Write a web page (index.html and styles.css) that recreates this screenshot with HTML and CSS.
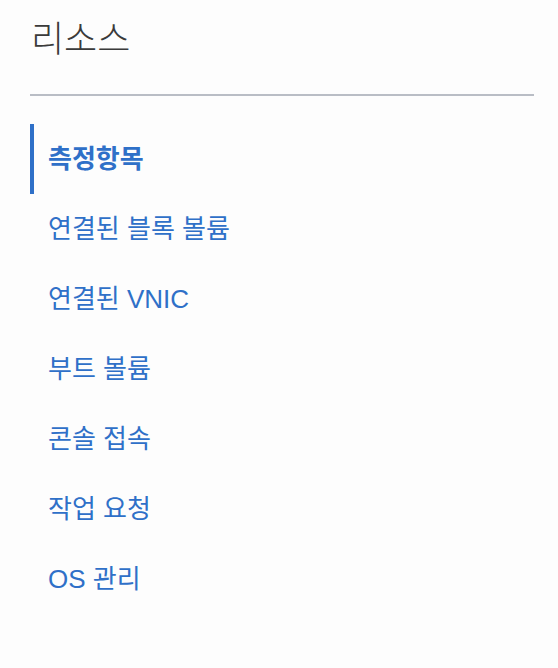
FILE: index.html
```html
<!DOCTYPE html>
<html lang="ko">
<head>
<meta charset="utf-8">
<link rel="stylesheet" href="styles.css">
</head>
<body>
<div class="panel">
  <h2 class="title">리소스</h2>
  <ul class="nav">
    <li class="item active">측정항목</li>
    <li class="item">연결된 블록 볼륨</li>
    <li class="item">연결된 VNIC</li>
    <li class="item">부트 볼륨</li>
    <li class="item">콘솔 접속</li>
    <li class="item">작업 요청</li>
    <li class="item">OS 관리</li>
  </ul>
</div>
</body>
</html>
```
FILE: styles.css
```css
html, body {
  margin: 0;
  padding: 0;
  background: #fdfdfd;
}
body {
  font-family: "Liberation Sans", "Noto Sans CJK KR", sans-serif;
}
.panel {
  padding: 0 24px 0 30px;
}
.title {
  margin: 0;
  padding: 16px 0 0 1px;
  height: 96px;
  box-sizing: border-box;
  font-size: 36px;
  font-weight: 300;
  color: #3a3a3a;
  line-height: 48px;
  border-bottom: 2px solid #b9bdc5;
}
.nav {
  list-style: none;
  margin: 28px 0 0 0;
  padding: 0;
}
.item {
  box-sizing: border-box;
  height: 70px;
  display: flex;
  align-items: center;
  padding-bottom: 6px;
  font-size: 26px;
  color: #2f70c8;
  border-left: 4px solid transparent;
  padding-left: 14px;
}
.item.active {
  border-left-color: #2f70c8;
  font-weight: 700;
}
```
